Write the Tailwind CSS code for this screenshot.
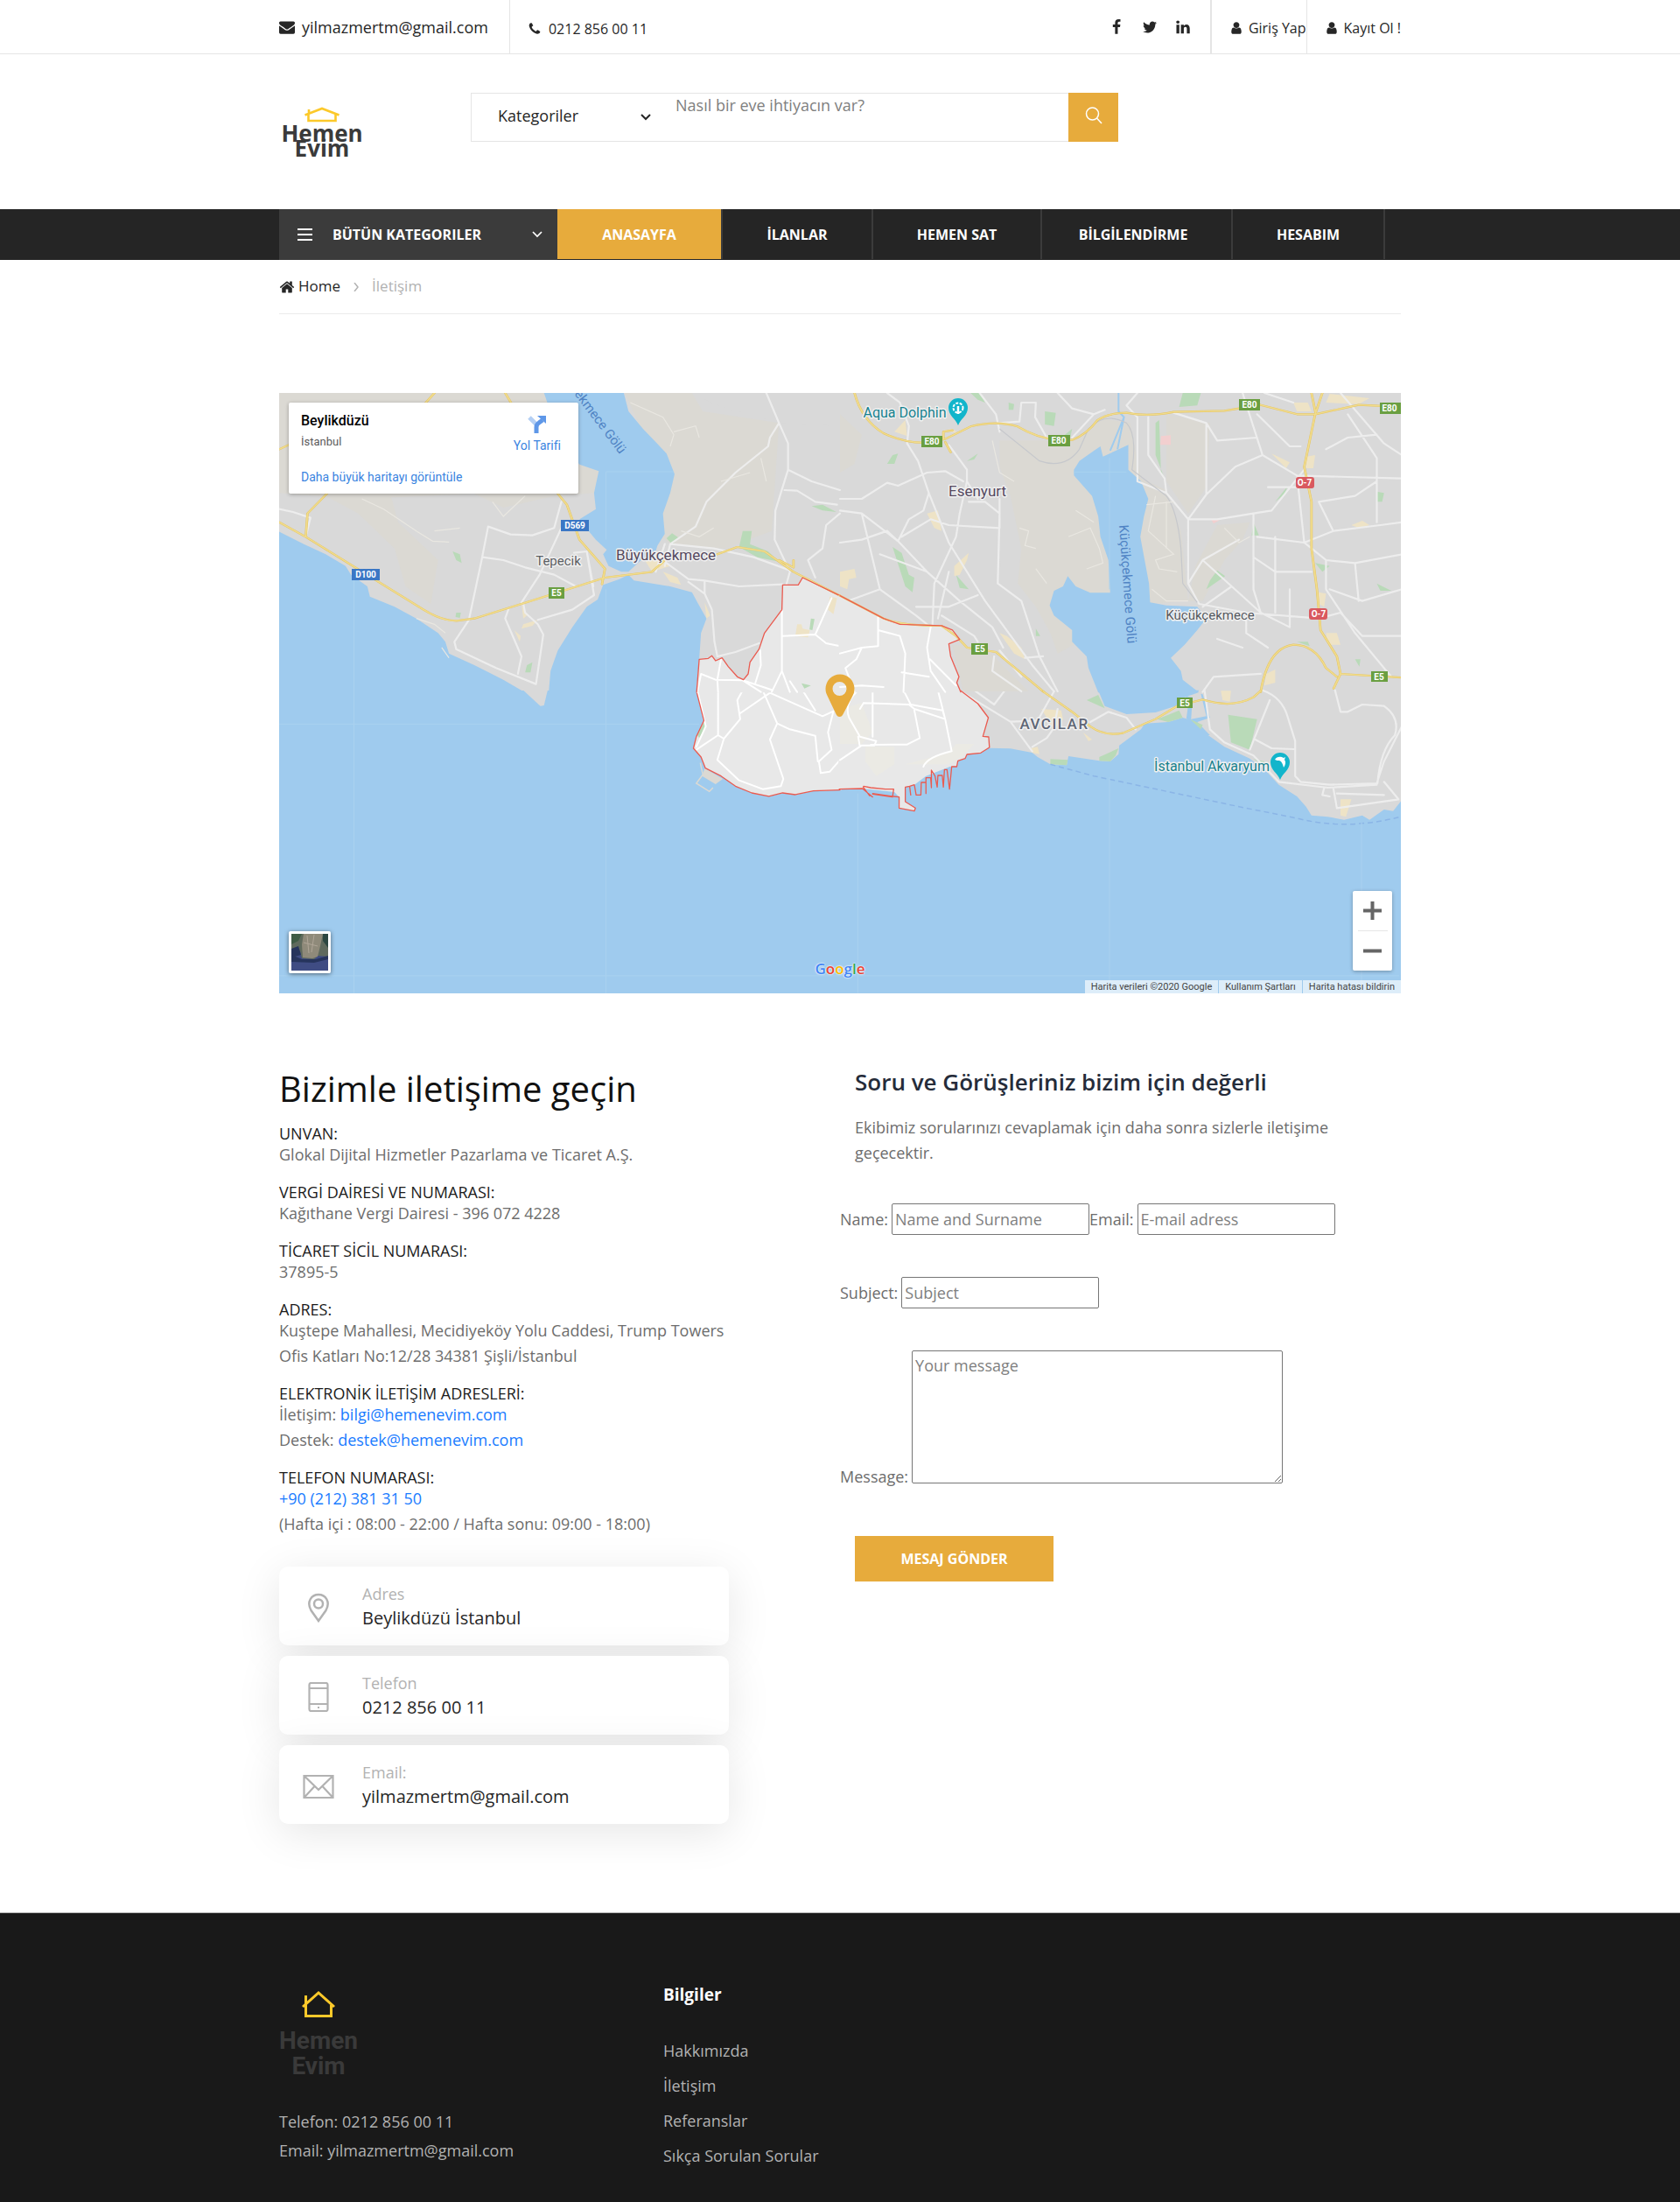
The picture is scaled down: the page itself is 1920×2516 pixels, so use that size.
<!DOCTYPE html>
<html lang="tr">
<head>
<meta charset="utf-8">
<meta name="viewport" content="width=device-width, initial-scale=1">
<title>Hemen Evim - İletişim</title>
<script src="https://cdn.jsdelivr.net/npm/@tailwindcss/browser@4"></script>
</head>
<body class="bg-white font-['Open_Sans',sans-serif] text-lg text-[#6d6d6d]">

<!-- Top bar -->
<div class="border-b border-[#e5e5e5]">
  <div class="mx-auto flex h-[61px] max-w-[1282px] items-stretch text-[#262626]">
    <a href="#" class="flex items-center gap-2 border-r border-[#e5e5e5] pr-6">
      <svg class="h-[18px] w-[18px]" viewBox="0 0 1792 1792" fill="currentColor"><path d="M1792 710v794q0 66-47 113t-113 47h-1472q-66 0-113-47t-47-113v-794q44 49 101 87 362 246 497 345 57 42 92.5 65.5t94.5 48 110 24.5h2q51 0 110-24.5t94.5-48 92.5-65.5q170-123 498-345 57-39 100-87zm0-294q0 79-49 151t-122 123q-376 261-468 325-10 7-42.5 31t-54 38.5-52 32.5-57.5 27-50 9h-2q-23 0-50-9t-57.5-27-52-32.5-54-38.5-42.5-31q-91-64-262-182.5t-205-142.5q-62-42-117-115.5t-55-136.5q0-78 41.5-130t118.5-52h1472q65 0 112.5 47t47.5 113z"/></svg>
      <span>yilmazmertm@gmail.com</span>
    </a>
    <a href="#" class="flex items-center gap-2 pt-1 pl-5 text-base">
      <svg class="h-4 w-4" viewBox="0 0 1792 1792" fill="currentColor"><path d="M1600 1240q0 27-10 70.5t-21 68.5q-21 50-122 106-94 51-186 51-27 0-53-3.5t-57.5-12.5-47-14.5-55.5-20.5-49-18q-98-35-175-83-127-79-264-216t-216-264q-48-77-83-175-3-9-18-49t-20.5-55.5-14.5-47-12.5-57.5-3.5-53q0-92 51-186 56-101 106-122 25-11 68.5-21t70.5-10q14 0 21 3 18 6 53 76 11 19 30 54t35 63.5 31 53.5q3 4 17.5 25t21.5 35.5 7 28.5q0 20-28.5 50t-62 55-62 53-28.5 46q0 9 5 22.5t8.5 20.5 14 24 11.5 19q76 137 174 235t235 174q2 1 19 11.5t24 14 20.5 8.5 22.5 5q18 0 46-28.5t53-62 55-62 50-28.5q14 0 28.5 7t35.5 21.5 25 17.5q25 15 53.5 31t63.5 35 54 30q70 35 76 53 3 7 3 21z"/></svg>
      <span>0212 856 00 11</span>
    </a>
    <div class="ml-auto flex items-center gap-5 pr-[22px]">
      <a href="#" aria-label="Facebook"><svg class="h-[18px] w-[18px]" viewBox="0 0 1792 1792" fill="currentColor"><path d="M1343 12v264h-157q-86 0-116 36t-30 108v189h293l-39 296h-254v759h-306v-759h-255v-296h255v-218q0-186 104-288.5t277-102.5q147 0 228 12z"/></svg></a>
      <a href="#" aria-label="Twitter"><svg class="h-[18px] w-[18px]" viewBox="0 0 1792 1792" fill="currentColor"><path d="M1684 408q-67 98-162 167 1 14 1 42 0 130-38 259.5t-115.5 248.5-184.5 210.5-258 146-323 54.5q-271 0-496-145 35 4 78 4 225 0 401-138-105-2-188-64.5t-114-159.5q33 5 61 5 43 0 85-11-112-23-185.5-111.5t-73.5-205.5v-4q68 38 146 41-66-44-105-115t-39-154q0-88 44-163 121 149 294.5 238.5t371.5 99.5q-8-38-8-74 0-134 94.5-228.5t228.5-94.5q140 0 236 102 109-21 205-78-37 115-142 178 93-10 186-50z"/></svg></a>
      <a href="#" aria-label="LinkedIn"><svg class="h-[18px] w-[18px]" viewBox="0 0 1792 1792" fill="currentColor"><path d="M477 625v991h-330v-991h330zm21-306q1 73-50.5 122t-135.5 49h-2q-82 0-132-49t-50-122q0-74 51.5-122.5t134.5-48.5 133 48.5 51 122.5zm1166 729v568h-329v-530q0-105-40.5-164.5t-126.5-59.5q-63 0-105.5 34.5t-63.5 85.5q-11 30-11 81v553h-329q2-399 2-647t-1-296l-1-48h329v144h-2q20-32 41-56t56.5-52 87-43.5 114.5-15.5q171 0 275 113.5t104 332.5z"/></svg></a>
    </div>
    <a href="#" class="flex items-center gap-1.5 border-l-2 border-[#e5e5e5] pt-0.5 pl-5 text-base">
      <svg class="h-4 w-4" viewBox="0 0 1792 1792" fill="currentColor"><path d="M1536 1399q0 109-62.5 187t-150.5 78h-854q-88 0-150.5-78t-62.5-187q0-85 8.5-160.5t31.5-152 58.5-131 94-89 134.5-34.5q131 128 313 128t313-128q76 0 134.5 34.5t94 89 58.5 131 31.5 152 8.5 160.5zm-256-887q0 159-112.5 271.5t-271.5 112.5-271.5-112.5-112.5-271.5 112.5-271.5 271.5-112.5 271.5 112.5 112.5 271.5z"/></svg>
      <span>Giriş Yap</span>
    </a>
    <a href="#" class="flex items-center gap-1.5 border-l border-[#e5e5e5] pt-0.5 pl-5 text-base">
      <svg class="h-4 w-4" viewBox="0 0 1792 1792" fill="currentColor"><path d="M1536 1399q0 109-62.5 187t-150.5 78h-854q-88 0-150.5-78t-62.5-187q0-85 8.5-160.5t31.5-152 58.5-131 94-89 134.5-34.5q131 128 313 128t313-128q76 0 134.5 34.5t94 89 58.5 131 31.5 152 8.5 160.5zm-256-887q0 159-112.5 271.5t-271.5 112.5-271.5-112.5-112.5-271.5 112.5-271.5 271.5-112.5 271.5 112.5 112.5 271.5z"/></svg>
      <span>Kayıt Ol !</span>
    </a>
  </div>
</div>

<!-- Logo and search -->
<header class="mx-auto flex h-[177px] max-w-[1282px] items-start pt-11">
  <div class="w-[219px] pt-4">
    <a href="#" class="flex w-[98px] flex-col items-center text-[#3a3a3a]">
      <svg class="h-[18px] w-[42px]" viewBox="0 0 42 18" fill="none" stroke="#fcc92a" stroke-width="2.6"><path d="M1.500 9.500 21 2 40.500 9.500M5.500 8.500V16H36.500V8.500M6 8V3"/></svg>
      <span class="mt-1 text-[26px] leading-[17px] font-bold">Hemen</span>
      <span class="text-[26px] leading-[17px] font-bold">Evim</span>
    </a>
  </div>
  <form class="flex h-14 w-[740px]">
    <div class="relative w-[220px] border border-r-0 border-[#e5e5e5]">
      <select aria-label="Kategoriler" class="h-full w-full appearance-none bg-white pb-1 pl-[30px] text-[#262626] outline-none"><option>Kategoriler</option></select>
      <svg class="pointer-events-none absolute top-[23px] right-3.5 h-2 w-3" viewBox="0 0 12 8" fill="none" stroke="#262626" stroke-width="2"><path d="M1 1l5 5 5-5"/></svg>
    </div>
    <input type="text" aria-label="Arama" placeholder="Nasıl bir eve ihtiyacın var?" class="min-w-0 flex-1 border-y border-[#e5e5e5] pb-7 pl-3.5 outline-none placeholder:text-[#808080]">
    <button type="submit" aria-label="Ara" class="flex w-[57px] justify-center bg-[#e7ab3c] pt-4"><svg class="h-5 w-5" viewBox="0 0 20 20" fill="none" stroke="#fff" stroke-width="1.500"><circle cx="8.500" cy="8" r="7"/><path d="M13.500 13l5.500 6"/></svg></button>
  </form>
</header>

<!-- Main navigation -->
<nav class="bg-[#252525]">
  <div class="mx-auto flex h-[58px] max-w-[1282px] text-base font-bold text-white">
    <button type="button" class="flex w-[318px] items-center bg-[#3b3b3b] pr-[17px] pl-[21px]">
      <svg class="h-4 w-[17px]" viewBox="0 0 17 16" fill="none" stroke="#fff" stroke-width="2"><path d="M0 2h17M0 8h17M0 14h17"/></svg>
      <span class="ml-[23px]">BÜTÜN KATEGORILER</span>
      <svg class="ml-auto h-2 w-3" viewBox="0 0 12 8" fill="none" stroke="#fff" stroke-width="1.700"><path d="M1 1l5 5 5-5"/></svg>
    </button>
    <a href="#" class="mb-px flex w-[189px] items-center justify-center border-r-2 border-[#3b3b3b] bg-[#e7ab3c]">ANASAYFA</a>
    <a href="#" class="mb-px flex w-[172px] items-center justify-center border-r-2 border-[#3b3b3b]">İLANLAR</a>
    <a href="#" class="mb-px flex w-[193px] items-center justify-center border-r-2 border-[#3b3b3b]">HEMEN SAT</a>
    <a href="#" class="mb-px flex w-[218px] items-center justify-center border-r-2 border-[#3b3b3b] pr-2">BİLGİLENDİRME</a>
    <a href="#" class="mb-px flex w-[174px] items-center justify-center border-r-2 border-[#3b3b3b]">HESABIM</a>
  </div>
</nav>

<main class="mx-auto max-w-[1282px]">
  <!-- Breadcrumb -->
  <div class="flex h-[62px] items-center border-b border-[#ebebeb] text-[17px]">
    <a href="#" class="flex items-center gap-1 text-[#262626]">
      <svg class="h-[18px] w-[18px]" viewBox="0 0 1792 1792" fill="currentColor"><path d="M1472 992v480q0 26-19 45t-45 19h-384v-384h-256v384h-384q-26 0-45-19t-19-45v-480q0-1 .5-3t.5-3l575-474 575 474q1 2 1 6zm223-69l-62 74q-8 9-21 11h-3q-13 0-21-7l-692-577-692 577q-12 8-24 7-13-2-21-11l-62-74q-8-10-7-23.5t11-21.5l719-599q32-26 76-26t76 26l244 204v-195q0-14 9-23t23-9h192q14 0 23 9t9 23v408l219 182q10 8 11 21.500t-7 23.500z"/></svg>
      <span>Home</span>
    </a>
    <svg class="mx-[15px] h-2.5 w-1.5" viewBox="0 0 6 10" fill="none" stroke="#b2b2b2" stroke-width="1.500"><path d="M1 0l4 5-4 5"/></svg>
    <span class="text-[#b2b2b2]">İletişim</span>
  </div>

  <!-- Map -->
  <section class="relative mt-[90px] aspect-[1282/686] w-full overflow-hidden font-[Roboto,sans-serif]">
    <svg class="block h-full w-full" viewBox="319 449 1282 686" preserveAspectRatio="xMidYMid slice">
      <defs>
        <style>
          .w{fill:#9fcbee}.l{fill:#d9d9d9}.b{fill:#dbd9d3}.g{fill:#b9dab8}.t{fill:#eee3c6}.d{fill:#e8e8e8}
          .s,.n,.y,.o,.r{fill:none;stroke-linejoin:round;stroke-linecap:round;vector-effect:non-scaling-stroke}
          .s{stroke:#ededed;stroke-width:2.200}.n{stroke:#fff;stroke-width:2}
          .o{stroke:#e6c35c;stroke-width:6.500}.y{stroke:#f0dc8e;stroke-width:4.200}.r{stroke:#ea5b50;stroke-width:1.300}
        </style>
        <path id="ya" d="M22 470 95 520 420 770Q470 808 510 808L560 800 690 750 920 660 1050 640 1085 600M1230 580 1285 555 1360 570 1440 640 1568 722M95 520 100 440 155 370M790 372 815 410 850 530 920 630 912 682M22 220 48 205M450 27 425 62M645 27 662 62M1400 600 1440 625 1440 600"/>
        <path id="yb" d="M40 27Q60 120 120 165 180 200 240 197L290 185 360 142Q430 120 490 142 540 180 600 188L640 188Q680 170 710 120 740 95 790 95 850 110 920 92L1060 88 1160 68 1260 100 1310 100 1430 68 1549 75M1330 27 1310 100 1280 280 1300 400 1300 560 1315 700 1325 840 1370 930 1380 990 1361 1040M1300 27 1312 100M1380 990 1555 1003M0 722 120 800Q170 825 280 825L320 860 350 900 430 915 562 1052M1160 1052Q1180 900 1250 890 1310 890 1340 970L1370 1000M285 185 285 160 310 155M290 195 305 230"/>
        <path id="yd" d="M560 0 640 70 690 120Q730 155 780 143L870 95 930 50 1000 28Q1080 60 1140 20L1160-2"/>
      </defs>
      <rect class="l" x="319" y="449" width="1282" height="686"/>
      <rect class="w" x="319" y="789" width="1282" height="346"/>

      <!-- South-east coast -->
      <g transform="translate(960 790) scale(.4145 .3333)">
        <path class="l" d="M300-4H1560V355L1525 410 1500 405 1460 440 1440 425 1390 440 1345 430 1300 425 1285 395 1260 360 1210 320 1180 280 1130 230 1060 190 1015 150 1000 130 960 95 945 90 905 105 840 110 830 130 770 185 768 215 745 240 715 238 630 222 625 253 580 250 545 225 530 210 470 196 412 194Z"/>
        <path class="w" d="M712-4 730 50 790 78 870 72 925 50 950 20 985 5 990-4Z"/>
        <path class="w" d="M950 15 962 30 955 92 1010 150 1020 150 985 105 1020 90 1000 10 995 8 1010 85 968 95 972 20Z"/>
        <path class="g" d="M680 30 712 12 730 58ZM1070 80 1150 95 1130 200 1078 175ZM875 95 935 65 945 90 905 105ZM580 232 628 235 625 253 580 250ZM715 225 768 195 760 220 745 240 715 238ZM965 95 1000 115 995 130ZM1140 232 1170 240 1165 250Z"/>
        <path class="t" d="M555 60 610 65 615 95 590 130 575 100ZM525 195 545 190 550 215 530 210ZM670 140 695 165 685 170ZM1050-2H1078L1075 35 1055 30ZM1380 370 1410 370 1395 430 1380 425Z"/>
        <path class="s" d="M333 0 470 104 530 205M370-4 425 45 455-4M470 104 545 100 590 0M530 190 570 160 590 125 600 60M690 105 740 70 790 90 815 130M1185 30 1130 200M1165-4Q1220 20 1235 90L1255 170 1255 290 1270 310 1350 320 1480 315 1500 240 1549 120M1480 320 1345 330 1210 310M1005-4 1020 130 1060 175 1140 220 1210 310M1145 165 1190 195 1252 198M1365-4 1380 70 1400 70 1440 45 1500 50Q1545 90 1530 150 1490 200 1482 315M1360 330 1370 400 1540 370 1500 310M1370 350 1500 355M1335 330 1330 355 1350 360"/>
        <path fill="none" stroke="#8bb5e6" stroke-width="1.500" stroke-dasharray="6 4" vector-effect="non-scaling-stroke" d="M580 250 700 290 1100 395 1260 435Q1400 480 1560 425"/>
      </g>

      <!-- South-west coast -->
      <g transform="translate(310 790) scale(.4145 .3333)">
        <path class="l" d="M695-4 742 50 752 48 762-4Z"/>
        <path class="b" d="M1195 263 1245 300 1225 318 1188 290Z"/>
        <path class="d" d="M1172-4 1193 100 1172 155 1164 195 1185 225 1197 263 1240 290 1280 325 1325 348 1372 360 1410 348 1445 354 1495 341 1572 338V-4Z"/>
        <path class="g" d="M1193 105 1198 125 1180 160 1175 150Z"/>
        <path class="n" d="M1175-4 1198 120 1172 190M1172 200 1232 150 1232-4M1232 150 1248 162 1293 95 1285 30 1300-4M1248 162 1230 235 1290 305 1355 335 1405 325 1412 300 1375 165 1395 110 1355-4M1293 75 1375 5 1520 85 1550 68 1535 140 1545 200 1510 240 1515 280 1540 275 1568 235M1395 110 1430 130 1500 152 1507 240M1465-4 1500 65"/>
        <path fill="none" stroke="#dbd9d3" stroke-width="1.500" vector-effect="non-scaling-stroke" d="M1183 245 1190 285 1172 315 1208 343 1218 330"/>
        <path class="r" d="M1172-2 1193 100 1172 155 1164 195 1185 225 1197 263 1240 290 1280 325 1325 348 1372 360 1410 348 1445 354 1495 341 1568 338"/>
      </g>
      <g transform="translate(960 790) scale(.4145 .3333)">
        <path class="d" d="M-4 335 62 333 150 345 163 362 163 400 205 410 208 400 180 378 180 328 205 320 237 290 303 258 322 255 325 238 345 230 350 216 388 211 412 192 410 156 394 154 409 90 380 42 330-4H-4Z"/>
        <path fill="#ebeae4" d="M0 60 60 40 90 140 60 180 0 180ZM70 190 150 190 150 250 100 290 70 240ZM180 250 300 210 320 180 370 180 340 220 300 250Z"/>
        <path class="n" d="M65 40 190 45 205 60 290 95 283 65 195 45M65 40 55 60M50-4Q10 40 25 90L55 155 100 170 95 185 60 185 0 235M90-4V155M85 183 185 182 220 160 205 65M175-4 195 45M270-4 290 95 308 205Q240 225 230 258M50 155 55 190"/>
        <path class="r" d="M-2 335 62 333 90 362M65 325 85 330 125 335 148 335 145 360 90 350M90 352 145 362M64 328 82 358M148 360 163 362 163 400 205 410 208 400 180 378 180 328 192 325 195 355M192 325 205 320 210 355 223 355 224 312 237 312 237 350V296H250L252 330 252 270 262 290 268 328 270 288 282 288 285 328 288 268 295 268 302 335 308 258 322 258 325 238 345 230 350 216 388 211 412 192 410 156 394 154 409 90 380 42 333-2"/>
      </g>

      <!-- North-west -->
      <g transform="translate(310 440) scale(.4145 .3333)">
        <path class="b" d="M22 27H760L850 272 903 295 890 370 780 380 640 420 560 372 240 390 22 370ZM975 27H1160L1190 90 1400 130 1380 500 1250 560 1100 545 1060 500 1112 305 1020 150ZM150 380 330 380 350 470 460 600 440 750 370 690 340 560 240 440Z"/>
        <path class="l" d="M1160 27H1568V140L1400 130 1230 70Z"/>
        <path class="w" d="M18 500 90 545 150 580 205 620 220 650 265 690 272 725 340 760 400 800 460 850 480 880 490 920 560 960 640 1010 700 1054H18ZM765 1054 770 980 790 910 830 830 870 760 900 735 915 685 960 665 985 650 1000 670 1100 690 1160 710 1175 745 1200 800 1185 850 1180 940 1172 1054ZM752 27H972L985 90 1025 150 1060 195 1090 235 1112 305 1100 370 1080 440 1085 510 1065 550 1060 570 1020 600 985 640 965 640 930 620 915 580 925 565 895 530 875 500 850 460 895 425 890 370 903 295 850 272 800 200Z"/>
        <path class="g" d="M1090 525 1105 508 1125 525 1105 545ZM1290 555 1300 500 1325 500 1320 545 1370 570 1400 605 1340 590ZM1490 415 1520 410 1558 435 1520 430ZM500 570 520 580 525 610 510 600ZM510 780 523 780 520 798 508 795ZM705 960 720 950 715 985 700 985Z"/>
        <path class="t" d="M1030 600 1080 590 1100 620 1050 640ZM1080 640 1120 660 1130 685 1100 675ZM695 820 735 805 720 825 690 835ZM670 840 688 860 685 880ZM1195 745 1210 790 1200 800ZM690 750 705 790 695 800Z"/>
        <path class="s" d="M22 425 60 435 108 455 95 520M545 805 580 600 598 485 660 512 720 515 780 490 800 400M583 590 640 600 700 625 780 650 840 690M690 745 740 650 800 490M545 805 505 880 510 905 620 970 730 1025 750 855 735 820 700 780 695 750M655 765 645 800 690 930 680 990M835 575 870 570 890 720 830 770 735 805M870 570 888 690M1365 27 1400 130 1425 200 1425 290 1390 430 1388 530 1430 640 1420 685M1400 130 1375 180 1370 210 1280 300 1200 400 1170 485 1100 545M1425 290 1490 330 1568 360M1415 360 1450 362 1500 400 1560 410M1568 440 1530 480 1520 560 1480 600 1500 660M1100 545 1220 560 1330 590 1430 635M1090 610 1150 665 1195 670 1290 690 1410 683M1150 675 1195 715 1215 770 1222 880 1230 930M1195 670 1195 715M1230 930 1280 915 1345 885M1085 545 1060 640M1100 545 1085 620"/>
        <path fill="none" stroke="#e9e7e1" stroke-width="1.200" vector-effect="non-scaling-stroke" d="M250 390 310 425 400 500 445 535 490 538M450 500 520 490M610 400 640 450 700 380M990 60 1080 110 1110 170 1100 210M1110 160 1170 140 1180 180M1240 330 1320 300M1130 500 1180 520 1220 490M1350 250 1365 330M400 800 450 820 480 850M470 900 490 935M230 180 260 100"/>
        <path class="d" d="M1465 660 1572 724V1054H1172L1180 940 1205 937 1215 928 1225 945 1243 935 1260 965 1285 1000 1302 1010 1315 990 1320 950 1345 905 1360 850 1408 770 1410 685 1453 685Z"/>
        <path class="t" d="M1450 820 1462 820 1465 835 1485 840 1480 865 1445 860ZM1540 725 1560 730 1550 785 1535 770Z"/>
        <path class="g" d="M1488 800 1498 802 1492 840 1484 838ZM1462 1022 1488 1030 1470 1040Z"/>
        <path class="n" d="M1408 770V980L1430 1052M1410 860 1500 855 1545 730M1500 855 1530 885 1568 895M1175 1052 1185 990 1225 1010 1300 1012 1380 1045M1240 940 1230 1010 1232 1052M1348 910 1350 960 1335 1020M1408 980 1380 1052M1300 1012 1350 1052M1430 1015 1450 1052"/>
        <use href="#ya" class="o"/><use href="#ya" class="y"/>
        <path class="r" d="M1173 1052 1180 940 1205 937 1215 928 1225 945 1243 935 1260 965 1285 1000 1302 1010 1315 990 1320 950 1345 905 1360 850 1408 770 1410 685 1453 685 1465 660 1568 722"/>
        <path fill="none" stroke="#aad2ef" vector-effect="non-scaling-stroke" d="M228 660V2085M923 297V530M923 700V2085M923 297H1110M22 1162H1180M22 2025H3110"/>
      </g>

      <!-- North-east -->
      <g transform="translate(960 440) scale(.4145 .3333)">
        <path class="b" d="M440 190 640 190 720 115 800 130 830 320 900 360 940 500 960 740 850 750 600 920 580 850 540 760 490 680 500 560 470 380 440 280ZM900 100 1020 130 1010 350 960 440 900 330ZM1040 480 1130 470 1110 530 1060 600 1000 740 960 740 980 620ZM0 100 60 170 40 270 0 300ZM310 890 400 900 520 1050H340Z"/>
        <path class="w" d="M700 225 718 210 725 245 760 225 795 205 795 290 830 330 850 390 838 450 828 520 840 600 852 680 855 745 900 755 985 760 1010 800 985 840 950 890 912 935 940 980 945 1010 990 1054H712L685 970 680 930 640 880 640 840 590 790 578 755 590 705 615 690 628 655 650 690 690 712 745 712 740 600 718 520 712 450 695 380 645 310 645 290 660 260Z"/>
        <path fill="none" stroke="#9fcbee" stroke-width="2" vector-effect="non-scaling-stroke" d="M768 27V90L783 110 765 220M783 110 745 225"/>
        <path class="g" d="M360 27H385L400 60 380 50ZM945 27H995L985 70 935 75ZM565 90 595 95 590 140 565 135ZM350 260 380 235 370 255ZM870 130 880 120 885 300 895 320 870 240ZM145 555 170 575 190 650 205 660 200 710 180 690ZM320 650 355 700 330 695ZM1040 635 1062 655 1010 700 1020 670ZM1200 400 1235 345 1225 375ZM1480 365 1500 370 1495 400 1480 400ZM1480 680 1520 705 1490 705ZM1140 470 1155 515 1135 515ZM145 240 160 235 150 270 130 270ZM465 60 480 65 478 85 465 85ZM1260 880 1290 880 1295 895ZM540 835 552 860 540 860ZM1420 940 1435 940 1432 965ZM1310 610 1350 620 1330 640ZM620 170 640 150 635 180Z"/>
        <path class="t" d="M150 160 180 120 185 175ZM240 440 270 430 280 500 260 490ZM315 620 355 575 350 600 330 650 315 655ZM0 640 40 630 45 660 25 665 20 700 0 690ZM1350 30 1460 45 1430 65 1340 60ZM1250 60 1290 60 1300 90 1260 90ZM1190 235 1240 265 1230 285ZM1285 245 1310 240 1305 285 1285 285ZM1340 850 1370 850 1380 890 1345 890ZM1175 990 1200 975 1200 1020 1170 1030ZM285 155 310 150 325 165ZM440 850 460 860 500 900 510 940 480 920ZM1320 710 1340 715 1335 760 1320 750ZM1410 480 1440 465 1460 480 1430 490Z"/>
        <path fill="#f2cfcf" d="M885 175 912 172 912 205 883 205ZM1022 458 1050 460 1030 475Z"/>
        <path class="s" d="M385 27 430 100 440 160M130 27 165 60 190 140 185 200 215 260 245 370 300 540 330 600 400 740 530 960 590 1050M300 205 350 290 350 330 330 440 320 520 260 680 255 820 245 1000M0 390 60 390 130 335 160 345 240 300 290 295 340 330M245 370 230 430 190 460 160 535 60 440 0 430M0 540 60 530 130 500 160 535 240 640 330 740 420 830 450 900M170 520 250 460 300 480 440 490 440 390M355 400 400 400 440 440 435 680 500 740 550 930 600 1050M350 330 380 390M500 60H540L538 110 570 180M500 60 495 125 440 130M640 180 700 100 730 85M820 27 790 70 820 110 820 330 900 370 960 460 960 680 990 750 1120 780 1320 800M850 110 850 240 895 320 900 370M920 95 1010 130 1040 190 1150 180M1110 27 1165 240 1260 310 1400 315 1549 320M1165 240 1090 280 1010 375 960 460M1260 310 1280 540M1010 130V375M960 460 1040 460 1140 440 1190 430 1280 290M1150 100 1240 210 1270 210M1170 27 1250 60M1140 440 1140 700 1160 780 1240 830M1150 520 1280 540 1340 600 1420 610 1549 580M1280 540 1360 500 1490 480 1549 470M1200 520 1200 780M1080 690 1000 760M1100 530 1000 600 960 680M1000 600 1080 690 1160 780M1350 700 1440 740 1549 700M1340 600 1340 700 1420 850 1520 1000M1320 400 1420 380 1480 330 1480 250 1400 100M1480 470 1480 330M1380 27 1500 200 1549 240M1340 220 1400 180 1480 170M1360 500 1320 400M1120 780 1120 850 1180 900M1000 1052 1030 1000 1160 990M1240 830 1240 700M1420 610 1430 740M1549 860 1440 860 1380 780 1320 800M60 440 110 700 210 790 250 830M110 700 0 750M110 580 240 640M210 760 300 760 380 720M300 640 270 800M280 790 370 860 380 880M425 930 420 980 500 1050M440 910 500 1000M510 935 560 930M1140 590 1200 640 1300 640M1040 870 1110 900M1180 350 1260 350M600 27 640 80 700 100"/>
        <path fill="none" stroke="#c6c8cc" stroke-width="1.200" vector-effect="non-scaling-stroke" d="M440 150 550 260Q620 290 660 220L685 150Q730 90 790 130 820 170 805 290L900 380Q930 430 940 560L945 680 985 745"/>
        <path fill="none" stroke="#e9e7e1" stroke-width="1.200" vector-effect="non-scaling-stroke" d="M495 490 520 500 510 550 540 560M540 630 570 680M630 520 690 490 715 560 725 610 680 630M650 430 700 470M845 410 920 400M870 380 850 500 920 580 870 600 880 630 930 640M900 400V560M420 190 440 300 480 330M1060 490 1100 540 1130 520M860 700 900 740 960 740"/>
        <path class="d" d="M-4 720 120 800 165 820 280 825 310 840 330 872 300 887 305 930 328 1000 322 1020 335 1054H-4Z"/>
        <path class="n" d="M105 795V895L60 900 45 940 15 970 40 1052M0 920 60 900M105 840 165 860 180 920 175 1052M250 830 240 900 250 980 290 1052M248 940 320 1030M0 1035 60 1030 120 1035M170 985 245 1000"/>
        <use href="#yb" class="o"/><use href="#yb" class="y"/>
        <path class="r" d="M0 722 120 800 165 820 280 825 310 840 330 872 300 887 305 930 328 1000 322 1020 333 1052"/>
        <path fill="none" stroke="#aad2ef" vector-effect="non-scaling-stroke" d="M743 250V700M645 298H790M743 1345V2085M49 1400V2085M1438 1500V2085"/>
      </g>
      <g transform="translate(960 790) scale(.4145 .3333)"><use href="#yd" class="o"/><use href="#yd" class="y"/></g>

      <!-- Road shields -->
      <g font-size="10" font-weight="700" fill="#fff" text-anchor="middle">
        <rect x="641" y="594" width="32" height="13" fill="#3b77c5"/><text x="657" y="604">D569</text>
        <rect x="402" y="650" width="32" height="13" fill="#3b77c5"/><text x="418" y="660">D100</text>
        <rect x="627" y="671" width="18" height="13" fill="#6a9f41"/><text x="636" y="681">E5</text>
        <rect x="1053" y="498" width="24" height="13" fill="#6a9f41"/><text x="1065" y="508">E80</text>
        <rect x="1198" y="497" width="25" height="13" fill="#6a9f41"/><text x="1210" y="507">E80</text>
        <rect x="1416" y="456" width="24" height="13" fill="#6a9f41"/><text x="1428" y="466">E80</text>
        <rect x="1577" y="460" width="24" height="13" fill="#6a9f41"/><text x="1588" y="470">E80</text>
        <rect x="1110" y="735" width="19" height="13" fill="#6a9f41"/><text x="1120" y="745">E5</text>
        <rect x="1345" y="797" width="18" height="12" fill="#6a9f41"/><text x="1354" y="807">E5</text>
        <rect x="1567" y="767" width="19" height="12" fill="#6a9f41"/><text x="1576" y="777">E5</text>
        <rect x="1481" y="545" width="21" height="13" rx="3" fill="#d9595f"/><text x="1491" y="555">O-7</text>
        <rect x="1496" y="695" width="21" height="13" rx="3" fill="#d9595f"/><text x="1507" y="705">O-7</text>
      </g>

      <!-- Place names -->
      <g paint-order="stroke" stroke="#f0f0f0" stroke-width="3" stroke-linejoin="round" text-anchor="middle" fill="#55495f" font-size="17">
        <text x="761" y="640">Büyükçekmece</text>
        <text x="1117" y="567">Esenyurt</text>
        <text x="638" y="646" font-size="15" fill="#5c5f63">Tepecik</text>
        <text x="1383" y="708" font-size="15" fill="#55595f">Küçükçekmece</text>
        <text x="1205" y="833" fill="#5f6675" font-weight="500" letter-spacing="1.500">AVCILAR</text>
        <text x="1034" y="477" font-size="16" fill="#17828f">Aqua Dolphin</text>
        <text x="1385" y="881" font-size="16" fill="#17828f">İstanbul Akvaryum</text>
      </g>
      <g fill="#4f83c4" font-size="15">
        <text transform="translate(1279 600) rotate(86)">Küçükçekmece Gölü</text>
        <text transform="translate(656 450) rotate(53)">ekmece Gölü</text>
      </g>

      <!-- Attraction pins -->
      <path d="M1095 486c-3-8-11-11-11-20a11 11 0 1 1 22 0c0 9-8 12-11 20Z" fill="#12b5cb"/>
      <circle cx="1095" cy="466" r="5.500" fill="none" stroke="#fff" stroke-width="2" stroke-dasharray="3 1.500"/>
      <path d="M1095 464v9" stroke="#fff" stroke-width="2.500"/>
      <path d="M1463 891c-3-8-11-11-11-20a11 11 0 1 1 22 0c0 9-8 12-11 20Z" fill="#12b5cb"/>
      <path d="M1457 868c2-4 7-4 10-2l2-1-1 3c2 3 1 6-1 9-1-4-2-7-5-8-2 0-3 0-5-1Z" fill="#fff"/>

      <!-- Location marker -->
      <path d="M959.500 819c-2 0-3-1-4-3l-9-19c-2-4-3-6-3-10a16 16 0 0 1 33 0c0 4-1 6-3 10l-10 19c-1 2-2 3-4 3ZM959.500 779a8 8 0 1 0 0 16 8 8 0 0 0 0-16Z" fill="#e7ab3c" fill-rule="evenodd"/>
    </svg>

    <!-- Place card -->
    <div class="absolute top-[11px] left-[11px] h-[104px] w-[331px] rounded-xs bg-white px-[14px] pt-[11px] shadow-[0_1px_4px_rgba(0,0,0,0.3)]">
      <div class="flex justify-between">
        <div>
          <p class="text-base leading-5 font-medium text-black">Beylikdüzü</p>
          <p class="mt-1 text-[13px] leading-5 text-[#5b5b5b]">İstanbul</p>
        </div>
        <a href="#" class="mr-1.5 flex flex-col items-center text-sm leading-5 text-[#3a84df]">
          <svg class="mt-1 mb-1 h-5 w-[22px]" viewBox="0 0 22 20"><path d="M2 2l8 8" stroke="#b4cff4" stroke-width="5"/><path d="M10 20V13q0-3 3-5l4-3" fill="none" stroke="#5e97e8" stroke-width="5"/><path d="M11 0h10v9Z" fill="#5e97e8"/></svg>
          <span>Yol Tarifi</span>
        </a>
      </div>
      <a href="#" class="mt-4 block text-sm leading-5 text-[#3a84df]">Daha büyük haritayı görüntüle</a>
    </div>

    <!-- Satellite switch -->
    <button type="button" aria-label="Uydu görünümü" class="absolute bottom-[23px] left-[11px] h-12 w-12 overflow-hidden rounded-xs border-3 border-white shadow-[0_1px_5px_rgba(0,0,0,0.5)]">
      <svg class="h-full w-full" viewBox="0 0 42 42"><rect width="42" height="42" fill="#3f4c83"/><path d="M0 0H42V26L30 25 26 29 12 28 10 20 4 16 0 20Z" fill="#5f6a5d"/><path d="M14 0H36L33 14 30 26 24 28 13 27 12 12Z" fill="#8f8a7a"/><path d="M0 0H12L8 8 0 12Z" fill="#3e5b45"/><path d="M36 0H42V16L36 8Z" fill="#2c4741"/><path d="M18 2l2 20M26 1l-3 20M14 10l16 4" stroke="#b0a698" stroke-width="1"/><path d="M0 17l8-3 3 10-11 3ZM0 24 12 29 28 29 42 25V29L26 33 0 32Z" fill="#26345c"/></svg>
    </button>

    <!-- Zoom buttons -->
    <div class="absolute right-2.5 bottom-[26px] flex w-[45px] flex-col items-center rounded-xs bg-white shadow-[0_1px_4px_rgba(0,0,0,0.3)]">
      <button type="button" aria-label="Yakınlaştır" class="flex h-[45px] w-full items-center justify-center"><svg class="h-[21px] w-[21px]" viewBox="0 0 21 21" stroke="#666" stroke-width="4"><path d="M10.500 0v21M0 10.500h21"/></svg></button>
      <span class="h-px w-[34px] bg-[#e6e6e6]"></span>
      <button type="button" aria-label="Uzaklaştır" class="flex h-[45px] w-full items-center justify-center"><svg class="h-[21px] w-[21px]" viewBox="0 0 21 21" stroke="#666" stroke-width="4"><path d="M0 10.500h21"/></svg></button>
    </div>

    <p class="absolute bottom-4 left-1/2 -translate-x-1/2 font-['Open_Sans',sans-serif] text-[17px] leading-6 font-semibold [text-shadow:0_0_2px_#fff,0_0_2px_#fff]"><span class="text-[#4285f4]">G</span><span class="text-[#ea4335]">o</span><span class="text-[#fbbc05]">o</span><span class="text-[#4285f4]">g</span><span class="text-[#34a853]">l</span><span class="text-[#ea4335]">e</span></p>

    <div class="absolute right-0 bottom-0 flex h-[15px] bg-white/65 text-[11px] leading-[15px] text-[#444]">
      <span class="px-[7px]">Harita verileri ©2020 Google</span>
      <a href="#" class="border-l border-[#9fcbee] px-[7px]">Kullanım Şartları</a>
      <a href="#" class="border-l border-[#9fcbee] px-[7px]">Harita hatası bildirin</a>
    </div>
  </section>

  <!-- Contact details and form -->
  <div class="flex items-start justify-between pt-[85px] pb-[101px]">
    <section class="w-[514px]">
      <h1 class="mb-[17px] text-[40px] leading-[48px] text-[#111]">Bizimle iletişime geçin</h1>
      <dl class="leading-[29px]">
        <dt class="leading-5 text-[#1c1c1c]">UNVAN:</dt>
        <dd class="mb-[18px]">Glokal Dijital Hizmetler Pazarlama ve Ticaret A.Ş.</dd>
        <dt class="leading-5 text-[#1c1c1c]">VERGİ DAİRESİ VE NUMARASI:</dt>
        <dd class="mb-[18px]">Kağıthane Vergi Dairesi - 396 072 4228</dd>
        <dt class="leading-5 text-[#1c1c1c]">TİCARET SİCİL NUMARASI:</dt>
        <dd class="mb-[18px]">37895-5</dd>
        <dt class="leading-5 text-[#1c1c1c]">ADRES:</dt>
        <dd class="mb-[18px]">Kuştepe Mahallesi, Mecidiyeköy Yolu Caddesi, Trump Towers<br>Ofis Katları No:12/28 34381 Şişli/İstanbul</dd>
        <dt class="leading-5 text-[#1c1c1c]">ELEKTRONİK İLETİŞİM ADRESLERİ:</dt>
        <dd class="mb-[18px]">İletişim: <a href="#" class="text-[#1a7cff]">bilgi@hemenevim.com</a><br>Destek: <a href="#" class="text-[#1a7cff]">destek@hemenevim.com</a></dd>
        <dt class="leading-5 text-[#1c1c1c]">TELEFON NUMARASI:</dt>
        <dd><a href="#" class="text-[#1a7cff]">+90 (212) 381 31 50</a><br>(Hafta içi : 08:00 - 22:00 / Hafta sonu: 09:00 - 18:00)</dd>
      </dl>
      <div class="mt-[34px] flex flex-col gap-3">
        <div class="flex h-[90px] items-center rounded-[10px] bg-white shadow-[0_10px_50px_rgba(0,0,0,0.1)]">
          <span class="flex w-[95px] justify-center pt-1 pr-1.5"><svg class="h-[34px] w-9" viewBox="0 0 36 34" fill="none" stroke="#b2b2b2" stroke-width="2.500"><path d="M18 32 9.500 20C4 10 10 2 18 2s14 8 8.500 18Z"/><circle cx="18" cy="12.500" r="5"/></svg></span>
          <span class="flex flex-col"><span class="leading-7 text-[#b2b2b2]">Adres</span><span class="text-xl leading-7 text-[#262626]">Beylikdüzü İstanbul</span></span>
        </div>
        <div class="flex h-[90px] items-center rounded-[10px] bg-white shadow-[0_10px_50px_rgba(0,0,0,0.1)]">
          <span class="flex w-[95px] justify-center pt-1 pr-1.5"><svg class="h-[34px] w-9" viewBox="0 0 36 34" fill="none" stroke="#b2b2b2" stroke-width="2.200"><rect x="7.500" y="1" width="21" height="32" rx="2"/><path d="M7.500 7h21M7.500 25h21M17 29h2"/></svg></span>
          <span class="flex flex-col"><span class="leading-7 text-[#b2b2b2]">Telefon</span><span class="text-xl leading-7 text-[#262626]">0212 856 00 11</span></span>
        </div>
        <div class="flex h-[90px] items-center rounded-[10px] bg-white shadow-[0_10px_50px_rgba(0,0,0,0.1)]">
          <span class="flex w-[95px] justify-center pt-1 pr-1.5"><svg class="h-[34px] w-9" viewBox="0 0 36 34" fill="none" stroke="#b2b2b2" stroke-width="2.200"><path d="M1.500 5h33v25h-33ZM1.500 5 18 21 34.500 5M1.500 30l12-13M34.500 30l-12-13"/></svg></span>
          <span class="flex flex-col"><span class="leading-7 text-[#b2b2b2]">Email:</span><span class="text-xl leading-7 text-[#262626]">yilmazmertm@gmail.com</span></span>
        </div>
      </div>
    </section>

    <section class="w-1/2">
      <div class="pl-[17px]">
        <h2 class="text-[26px] leading-8 font-semibold text-[#252c3a]">Soru ve Görüşleriniz bizim için değerli</h2>
        <p class="mt-[22px] max-w-[570px] leading-[29px]">Ekibimiz sorularınızı cevaplamak için daha sonra sizlerle iletişime geçecektir.</p>
      </div>
      <form class="mt-[43px]">
        <div class="flex items-center">
          <label for="name" class="mr-1">Name:</label>
          <input id="name" type="text" placeholder="Name and Surname" class="h-9 w-[226px] rounded-xs border border-[#767676] px-[3px] placeholder:text-[#808080]">
          <label for="email" class="mr-1">Email:</label>
          <input id="email" type="email" placeholder="E-mail adress" class="h-9 w-[226px] rounded-xs border border-[#767676] px-[3px] placeholder:text-[#808080]">
        </div>
        <div class="mt-12 flex items-center">
          <label for="subject" class="mr-1">Subject:</label>
          <input id="subject" type="text" placeholder="Subject" class="h-9 w-[226px] rounded-xs border border-[#767676] px-[3px] placeholder:text-[#808080]">
        </div>
        <div class="mt-12 flex items-end">
          <label for="message" class="mr-1 leading-4">Message:</label>
          <textarea id="message" placeholder="Your message" class="h-[152px] w-[424px] rounded-xs border border-[#767676] px-[3px] py-0.5 leading-[29px] placeholder:text-[#808080]"></textarea>
        </div>
        <button type="submit" class="mt-[60px] ml-[17px] h-[52px] w-[227px] bg-[#e7ab3c] text-base font-bold text-white">MESAJ GÖNDER</button>
      </form>
    </section>
  </div>
</main>

<footer class="border-t border-[#b2b2b2] bg-[#191919] text-[#b2b2b2]">
  <div class="mx-auto flex max-w-[1282px] pt-[77px] pb-[33px]">
    <div class="w-[439px] pt-3">
      <a href="#" class="flex w-[90px] flex-col items-center font-[Roboto,sans-serif] text-[#3a3a3a]">
        <svg class="h-[31px] w-[38px]" viewBox="0 0 38 31" fill="none" stroke="#fcc92a" stroke-width="3"><path d="M1 18 19 2 37 18M4.500 16V28.500H33.500V16M4.500 17V5"/></svg>
        <span class="mt-[11px] text-[28px] leading-[29px] font-bold">Hemen</span>
        <span class="text-[28px] leading-[29px] font-bold">Evim</span>
      </a>
      <p class="mt-[33px] leading-[33px]">Telefon: 0212 856 00 11<br>Email: yilmazmertm@gmail.com</p>
    </div>
    <div>
      <h3 class="text-[19px] leading-8 font-bold text-white">Bilgiler</h3>
      <ul class="mt-7 leading-10">
        <li><a href="#">Hakkımızda</a></li>
        <li><a href="#">İletişim</a></li>
        <li><a href="#">Referanslar</a></li>
        <li><a href="#">Sıkça Sorulan Sorular</a></li>
      </ul>
    </div>
  </div>
</footer>
</body>
</html>
